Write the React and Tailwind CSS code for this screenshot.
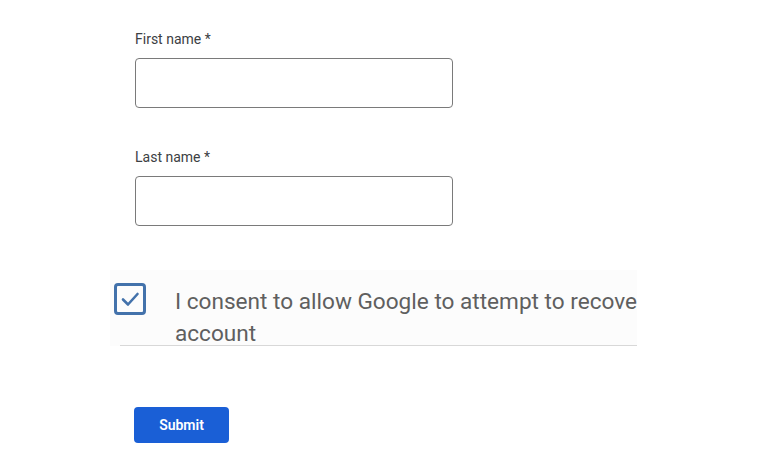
export default function App() {
  return (
    <div className="w-[784px] h-[471px] bg-white overflow-hidden relative" style={{ fontFamily: "Roboto, 'Liberation Sans', Arial, sans-serif" }}>
      <div className="pl-[135px] pt-[31px] flex flex-col">
        <label className="text-[14px] leading-[16px] text-[#3c4043]">First name *</label>
        <div className="mt-[11px] w-[318px] h-[50px] rounded-[4px] border border-[#7a7a7a]"></div>
        <label className="mt-[41px] text-[14px] leading-[16px] text-[#3c4043]">Last name *</label>
        <div className="mt-[11px] w-[318px] h-[50px] rounded-[4px] border border-[#7a7a7a]"></div>
      </div>
      <div className="ml-[110px] mt-[44px] w-[527px] h-[76px] bg-[#fcfcfc] relative overflow-hidden">
        <div className="absolute left-[4px] top-[13px] w-[32px] h-[32px] rounded-[4px] border-[3px] border-[#4372ab] flex items-center justify-center">
          <svg width="22" height="22" viewBox="0 0 22 22" fill="none">
            <path d="M4 11.5 L9 16.5 L18.5 6" stroke="#4372ab" strokeWidth="2.6" strokeLinecap="round" strokeLinejoin="round" />
          </svg>
        </div>
        <div className="absolute left-[65px] top-[16px] w-[600px] text-[22.6px] leading-[32px] text-[#5f5f5f] whitespace-nowrap">
          I consent to allow Google to attempt to recover my<br />account
        </div>
        <div className="absolute left-[10px] right-0 bottom-[0px] h-[1px] bg-[#d8d8d8]"></div>
      </div>
      <div className="pl-[134px] mt-[61px]">
        <button className="w-[95px] h-[36px] rounded-[4px] bg-[#1a5fd6] text-white text-[14px] font-semibold">Submit</button>
      </div>
    </div>
  );
}
